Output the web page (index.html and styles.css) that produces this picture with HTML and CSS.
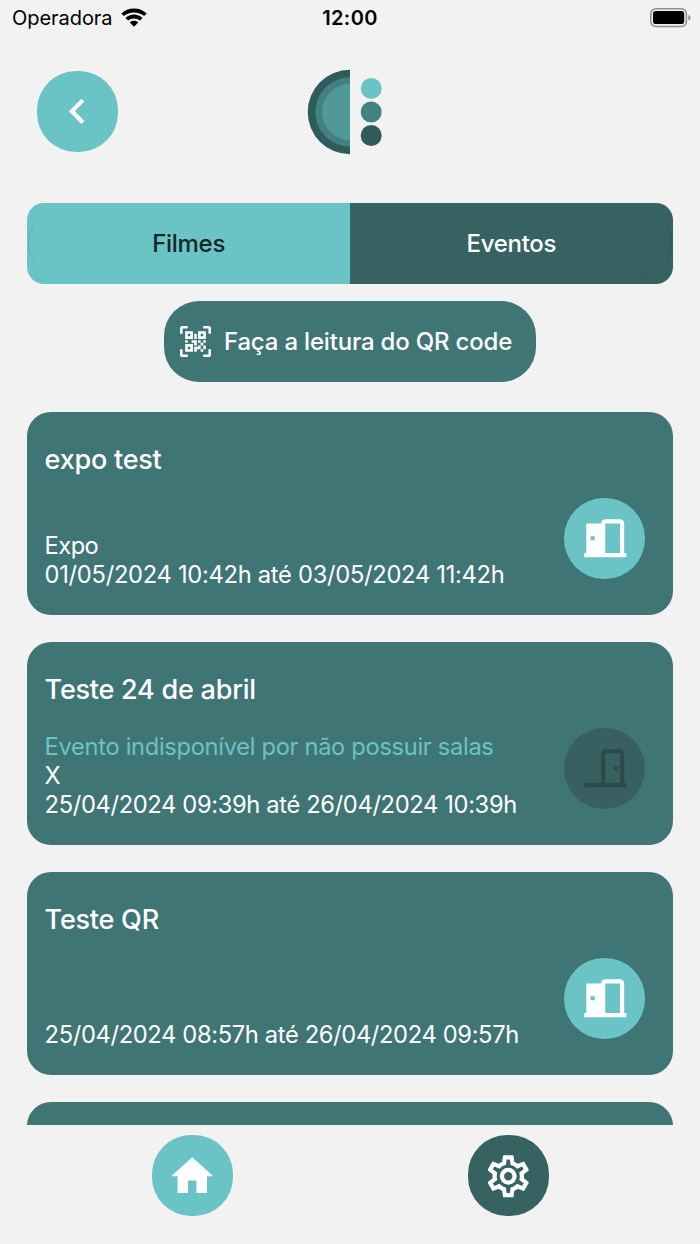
FILE: index.html
```html
<!DOCTYPE html>
<html lang="pt-BR">
<head>
<meta charset="utf-8">
<title>Eventos</title>
<link rel="stylesheet" href="styles.css">
</head>
<body>
<div class="app">
  <div class="status">
    <div class="carrier"><span class="carrier-name">Operadora</span>
      <svg class="wifi" viewBox="0 0 26 19"><path d="M13 0.4C18 0.4 22.5 2.3 25.7 5.4L23.1 8.1C20.4 5.5 16.9 4.400 13 4.400S5.6 5.5 2.9 8.1L.3 5.4C3.5 2.3 8 .4 13 .4ZM13 6.6C16.300 6.600 19.300 7.900 21.500 10L18.900 12.600C17.300 11.100 15.300 10.400 13 10.400S8.700 11.100 7.100 12.600L4.500 10C6.700 7.900 9.700 6.600 13 6.600ZM13 12.800C14.700 12.800 16.200 13.400 17.300 14.500L13 18.800L8.700 14.500C9.800 13.400 11.300 12.800 13 12.800Z"/></svg>
    </div>
    <div class="clock">12:00</div>
    <svg class="battery" viewBox="0 0 42 20"><rect x=".8" y=".8" width="35.600" height="17.700" rx="5" fill="none" stroke="#8f8f8f" stroke-width="1.500"/><rect x="3" y="3" width="31.200" height="13" rx="2.800"/><path d="M38.300 7C41.300 7.700 41.300 11.700 38.300 12.400Z" fill="#8f8f8f"/></svg>
  </div>

  <header class="header">
    <button class="round light"><svg class="icon" viewBox="0 0 24 24"><path d="M15.410 16.580L10.830 12L15.410 7.410L14 6L8 12L14 18L15.410 16.580Z"/></svg></button>
    <svg class="logo" viewBox="0 0 76 86">
      <path d="M43 .7A42.300 42.300 0 0 0 43 85.300Z" fill="#2f5b5b"/>
      <path d="M43 8.300A34.700 34.700 0 0 0 43 77.700Z" fill="#438080"/>
      <path d="M43 14.900A28.100 28.100 0 0 0 43 71.100Z" fill="#4f9999"/>
      <circle cx="64.200" cy="19.400" r="10.500" fill="#6ac3c4"/>
      <circle cx="64.200" cy="43" r="10.500" fill="#438282"/>
      <circle cx="64.200" cy="66.500" r="10.500" fill="#2f5b5b"/>
    </svg>
  </header>

  <div class="tabs">
    <div class="tab tab-on">Filmes</div>
    <div class="tab tab-off">Eventos</div>
  </div>

  <button class="scan">
    <svg class="qr" viewBox="0 0 24 24"><path d="M4,4H10V10H4V4M20,4V10H14V4H20M14,15H16V13H14V11H16V13H18V11H20V13H18V15H20V18H18V20H16V18H13V20H11V16H14V15M16,15V18H18V15H16M4,20V14H10V20H4M6,6V8H8V6H6M16,6V8H18V6H16M6,16V18H8V16H6M4,11H6V13H4V11M9,11H13V15H11V13H9V11M11,6H13V10H11V6M2,2V6H0V2A2,2 0 0,1 2,0H6V2H2M22,0A2,2 0 0,1 24,2V6H22V2H18V0H22M2,18V22H6V24H2A2,2 0 0,1 0,22V18H2M22,22V18H24V22A2,2 0 0,1 22,24H18V22H22Z"/></svg>
    <span>Faça a leitura do QR code</span>
  </button>

  <main class="list">
    <article class="card">
      <div class="info">
        <h2 class="title">expo test</h2>
        <div class="details">
          <p class="venue">Expo</p>
          <p class="dates-may">01/05/2024 10:42h até 03/05/2024 11:42h</p>
        </div>
      </div>
      <button class="round light door"><svg class="icon" viewBox="0 0 24 24"><path fill-rule="evenodd" d="M12,3C10.890,3 10,3.890 10,5H3V19H2V21H22V19H21V5C21,3.890 20.110,3 19,3H12M12,5H19V19H12V5M5,11H7V13H5V11Z"/></svg></button>
    </article>
    <article class="card">
      <div class="info">
        <h2 class="title">Teste 24 de abril</h2>
        <div class="details">
          <p class="warn">Evento indisponível por não possuir salas</p>
          <p>X</p>
          <p>25/04/2024 09:39h até 26/04/2024 10:39h</p>
        </div>
      </div>
      <button class="round disabled door"><svg class="icon" viewBox="0 0 24 24"><path fill-rule="evenodd" d="M16,11H18V13H16V11M12,3H19C20.110,3 21,3.890 21,5V19H22V21H2V19H10V5C10,3.890 10.890,3 12,3M12,5V19H19V5H12Z"/></svg></button>
    </article>
    <article class="card">
      <div class="info">
        <h2 class="title">Teste QR</h2>
        <div class="details">
          <p>25/04/2024 08:57h até 26/04/2024 09:57h</p>
        </div>
      </div>
      <button class="round light door"><svg class="icon" viewBox="0 0 24 24"><path fill-rule="evenodd" d="M12,3C10.890,3 10,3.890 10,5H3V19H2V21H22V19H21V5C21,3.890 20.110,3 19,3H12M12,5H19V19H12V5M5,11H7V13H5V11Z"/></svg></button>
    </article>
    <article class="card"></article>
  </main>

  <nav class="nav">
    <button class="round light"><svg class="icon" viewBox="0 0 24 24"><path d="M10,20V14H14V20H19V12H22L12,3L2,12H5V20H10Z"/></svg></button>
    <button class="round dark"><svg class="icon" viewBox="0 0 24 24"><path d="M12,8A4,4 0 0,1 16,12A4,4 0 0,1 12,16A4,4 0 0,1 8,12A4,4 0 0,1 12,8M12,10A2,2 0 0,0 10,12A2,2 0 0,0 12,14A2,2 0 0,0 14,12A2,2 0 0,0 12,10M10,22C9.75,22 9.54,21.82 9.5,21.58L9.13,18.93C8.5,18.68 7.96,18.34 7.44,17.94L4.95,18.95C4.73,19.03 4.46,18.95 4.34,18.73L2.34,15.27C2.21,15.05 2.27,14.78 2.46,14.63L4.57,12.97L4.5,12L4.57,11L2.46,9.37C2.27,9.22 2.21,8.95 2.34,8.73L4.34,5.27C4.46,5.05 4.73,4.96 4.95,5.05L7.44,6.05C7.96,5.66 8.5,5.32 9.13,5.07L9.5,2.42C9.54,2.18 9.75,2 10,2H14C14.25,2 14.46,2.18 14.5,2.42L14.87,5.07C15.5,5.32 16.04,5.66 16.56,6.05L19.05,5.05C19.27,4.96 19.54,5.05 19.66,5.27L21.66,8.73C21.79,8.95 21.73,9.22 21.54,9.37L19.43,11L19.5,12L19.43,13L21.54,14.63C21.73,14.78 21.79,15.05 21.66,15.27L19.66,18.73C19.54,18.95 19.27,19.04 19.05,18.95L16.56,17.95C16.04,18.34 15.5,18.68 14.87,18.93L14.5,21.58C14.46,21.82 14.25,22 14,22H10M11.25,4L10.88,6.61C9.68,6.86 8.62,7.5 7.85,8.39L5.44,7.35L4.69,8.65L6.8,10.2C6.4,11.37 6.4,12.64 6.8,13.8L4.68,15.36L5.43,16.66L7.86,15.62C8.63,16.5 9.68,17.14 10.87,17.38L11.24,20H12.76L13.13,17.39C14.32,17.14 15.37,16.5 16.14,15.62L18.57,16.66L19.32,15.36L17.2,13.81C17.6,12.64 17.6,11.37 17.2,10.2L19.31,8.65L18.56,7.35L16.15,8.39C15.38,7.5 14.32,6.86 13.12,6.62L12.75,4H11.25Z"/></svg></button>
  </nav>
</div>
</body>
</html>
```
FILE: styles.css
```css
* { box-sizing: border-box; }
body { margin: 0; background: #f2f2f2; font-family: Inter, "Liberation Sans", sans-serif; color: #fff; }
button { border: 0; padding: 0; font: inherit; color: inherit; }
svg { display: block; flex: none; }
.app { display: flex; flex-direction: column; width: 700px; height: 1244px; overflow: hidden; white-space: nowrap; }

.status { display: grid; grid-template-columns: 1fr auto 1fr; align-items: center; height: 36px; padding: 0 9px 0 12px; color: #000; font-size: 20px; }
.carrier { display: flex; align-items: center; gap: 8px; }
.carrier-name { letter-spacing: -0.050px; }
.wifi { width: 26px; height: 19px; margin-top: -2px; }
.clock { font-weight: 600; letter-spacing: 0.4px; margin-left: -3px; }
.battery { width: 42px; height: 20px; justify-self: end; margin: -1px -1px 0 0; }

.header { display: grid; grid-template-columns: 1fr auto 1fr; align-items: center; height: 151px; padding: 0 37px; }
.logo { width: 76px; height: 86px; margin-left: -11px; }

.round { display: flex; align-items: center; justify-content: center; flex: none; width: 81px; height: 81px; border-radius: 39px; }
.icon { width: 50.5px; height: 50.5px; fill: #fff; }
.light { background: #6ac3c4; }
.dark { background: #366262; }
.disabled { background: #386061; }
.disabled .icon { fill: #2c4a4b; }

.tabs { display: flex; margin: 16px 27.3px 0; height: 81px; border-radius: 17px; overflow: hidden; flex: none; }
.tab { position: relative; flex: 1; display: flex; align-items: center; justify-content: center; font-size: 24px; font-weight: 500; letter-spacing: -0.3px; }
.tab-on { background: #6ac3c4; color: #14272a; }
.tab-off { background: #366262; }
.tab::after { content: ""; position: absolute; top: 8px; bottom: 8px; width: 32px; }
.tab-on::after { left: 1px; border-left: 1px solid #5fb5b6; border-radius: 32px 0 0 32px; }
.tab-off::after { right: 1px; border-right: 1px solid #2f5859; border-radius: 0 32px 32px 0; }

.scan { display: flex; align-items: center; align-self: center; flex: none; width: 372px; height: 81px; margin-top: 17px; padding-left: 15.500px; gap: 13.500px; border-radius: 35px; background: #407576; font-size: 24px; font-weight: 500; letter-spacing: -0.190px; }
.qr { width: 31px; height: 31px; fill: #fff; }

.list { display: flex; flex-direction: column; gap: 26.800px; height: 713.100px; margin-top: 30.400px; padding: 0 27.300px; overflow: hidden; flex: none; }
.card { display: flex; justify-content: space-between; flex: none; height: 203px; padding: 0 27.400px 0 17.300px; border-radius: 24px; background: #407576; }
.info { display: flex; flex-direction: column; justify-content: space-between; padding: 30.600px 0 25.500px; }
.title { margin: 0; font-size: 27px; line-height: 34px; font-weight: 500; letter-spacing: -0.230px; }
.details { font-size: 23.700px; line-height: 28.800px; letter-spacing: -0.350px; }
.details p { margin: 0; }
.details .venue { letter-spacing: -0.550px; }
.details .dates-may { letter-spacing: -0.280px; }
.details .warn { color: #6ac3c4; letter-spacing: -0.320px; }
.door { margin-top: 85.800px; border-radius: 40px; }

.nav { display: flex; justify-content: center; gap: 235px; margin-top: 10px; }
```
